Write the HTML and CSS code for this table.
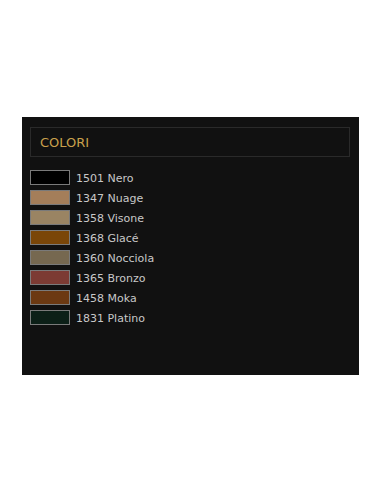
FILE: index.html
```html
<!DOCTYPE html>
<html lang="it">
<head>
    <meta charset="UTF-8">
    <meta name="viewport" content="width=device-width, initial-scale=1.0">
    <title>Colori</title>
    <link rel="stylesheet" href="styles.css">
</head>
<body>
    <div class="panel">
        <div class="panel-title">COLORI</div>
        <ul class="colors">
            <li><span class="swatch" style="background:#000000"></span>1501 Nero</li>
            <li><span class="swatch" style="background:#a47e5a"></span>1347 Nuage</li>
            <li><span class="swatch" style="background:#9a8463"></span>1358 Visone</li>
            <li><span class="swatch" style="background:#7a4608"></span>1368 Glacé</li>
            <li><span class="swatch" style="background:#766850"></span>1360 Nocciola</li>
            <li><span class="swatch" style="background:#7c3b33"></span>1365 Bronzo</li>
            <li><span class="swatch" style="background:#6c3912"></span>1458 Moka</li>
            <li><span class="swatch" style="background:#0c1f17"></span>1831 Platino</li>
        </ul>
    </div>
</body>
</html>
```

FILE: styles.css
```css
body { margin: 0; background-color: #fff; font-family: "DejaVu Sans", Tahoma, sans-serif; }
.panel {
    background-color: #111;
    width: 320px;
    height: 248px;
    margin: 117px 0 0 22px;
    padding: 10px 9px 0 8px;
}
.panel-title {
    border: 1px solid #2a2a2a;
    height: 28px;
    line-height: 29px;
    padding-left: 9px;
    color: #c9a04c;
    font-size: 13px;
}
.colors { list-style: none; margin: 13px 0 0; padding: 0; }
.colors li {
    display: flex;
    align-items: flex-start;
    height: 20px;
    line-height: 18px;
    color: #c8c8c8;
    font-size: 11px;
}
.swatch {
    width: 38px;
    height: 13px;
    border: 1px solid #7a7a7a;
    margin-right: 6px;
}
```
